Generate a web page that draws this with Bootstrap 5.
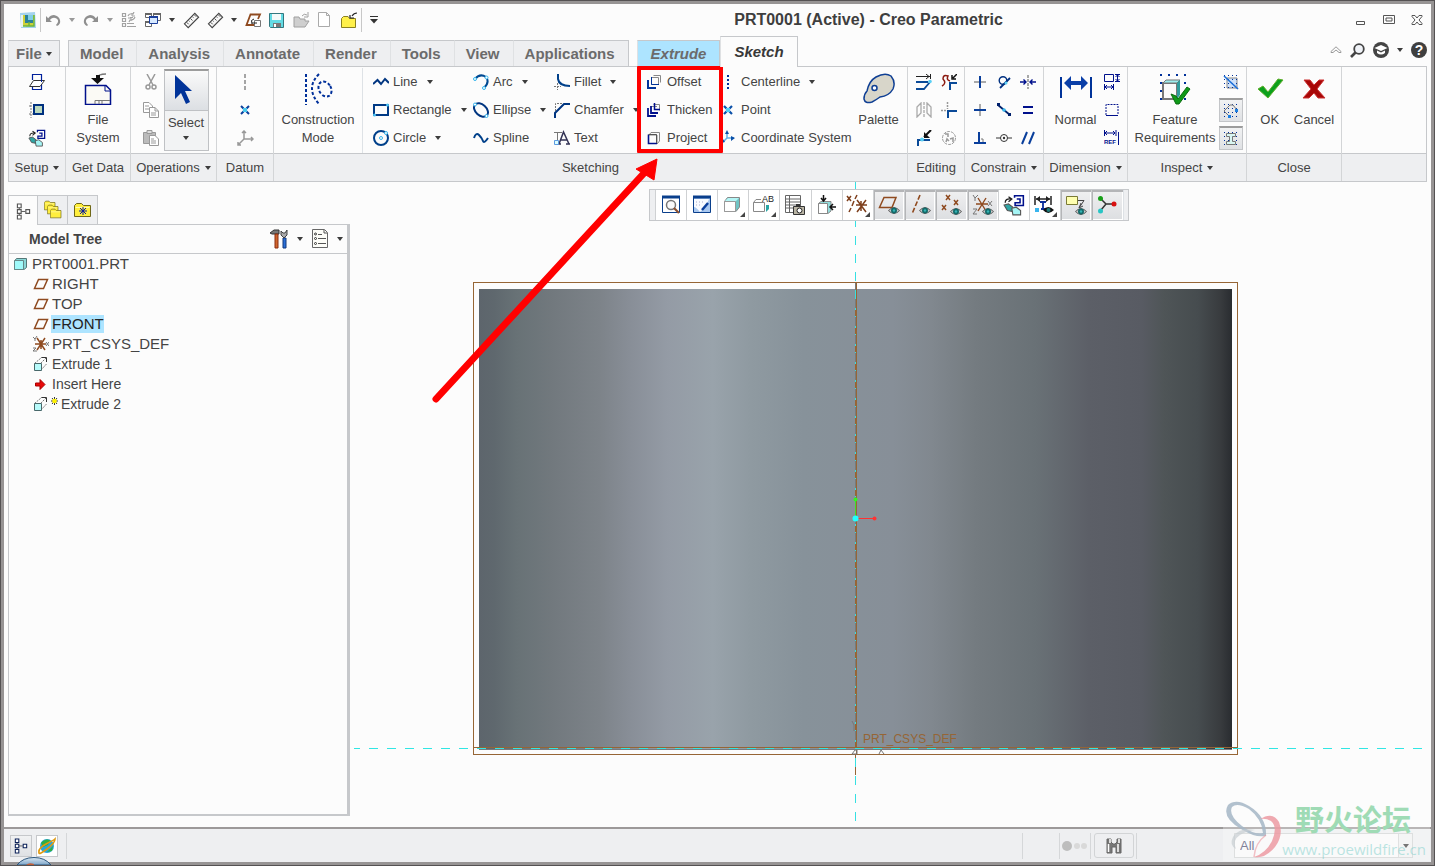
<!DOCTYPE html>
<html lang="en">
<head>
<meta charset="utf-8">
<meta name="viewport" content="width=device-width, initial-scale=1">
<title>PRT0001 (Active) - Creo Parametric</title>
<link href="https://cdn.jsdelivr.net/npm/bootstrap@5.3.0/dist/css/bootstrap.min.css" rel="stylesheet">
<style>
:root{--line:#c6c8cb;--soft:#eeeff1;--ink:#444;--paper:#fcfcfc}
body{font-family:"Liberation Sans",Arial,sans-serif;font-size:13px;line-height:18px;color:var(--ink);background:var(--paper)}
svg{display:block;flex:none}
button{color:inherit}
.app-frame{border:1px solid #555253}
.app-inner{border:3px solid #979494;background:var(--paper)}
.bare{background:none;border:0;padding:0;color:inherit;display:flex;align-items:center}
.caret-dn{display:inline-block;flex:none;border:3px solid transparent;border-top:4px solid #3c3c3c;border-bottom:0}
.caret-off{border-top-color:#9a9a9a}
/* title bar */
.titlebar{height:32px;padding-left:8px}
.q-icon{width:24px;height:24px;justify-content:center}
.q-caret{width:14px;height:24px;justify-content:center}
.v-rule{width:1px;height:24px;background:#c8c8c8}
.win-title{font-size:16px;font-weight:bold;color:#3e3e3e;padding-right:4px}
/* ribbon tabs */
.tabs-row{padding:0 4px;height:30px}
.r-tab{height:26px;padding:0 13px 0 11px;background:var(--soft);border:1px solid var(--line);border-bottom:0;border-left-color:#dfe1e3;border-right:0;font-size:15px;font-weight:bold;color:#6b6b6b;text-decoration:none;display:flex;align-items:center}
.r-tab.first{border-left-color:var(--line)}
.r-tab.last{border-right:1px solid var(--line)}
.r-tab.file{padding:0 7px;width:52px;border-right:1px solid var(--line)}
.r-tab.ctx{background:#ade4ff;padding:0 13px;font-style:italic;border-right:1px solid var(--line)}
.r-tab.on{background:var(--paper);height:31px;padding:0 13px;font-style:italic;color:#383838;border-right:1px solid var(--line);margin-bottom:-1px;z-index:1;position:relative}
/* ribbon */
.ribbon{margin:0 4px;border:1px solid var(--line)}
.r-group{border-right:1px solid #d3d5d7;flex:none;display:flex;flex-direction:column}
.r-body{height:86px;display:flex;justify-content:center;padding-top:1px}
.r-label{height:28px;background:var(--soft);border-top:1px solid var(--line);justify-content:center;gap:5px;width:100%;white-space:nowrap}
.w-s{width:57px}.w-m{width:65px}.w-l{width:79px}.w-dim{width:84px}.w-ops{width:86px}.w-close{width:95px}.w-insp{width:119px}.w-sk{width:634px}
.stack{display:grid;grid-template-rows:repeat(3,28px);align-items:center;justify-items:center}
.stack.two{grid-template-columns:25px 25px}
.stack.three{grid-template-columns:24px 24px 24px}
.big{flex-direction:column;justify-content:flex-start;padding-top:5px;gap:6px}
.big span{display:block;text-align:center}
.tool{gap:4px;white-space:nowrap}
.tool .caret-dn{margin-left:5px}
.split{width:45px;height:82px;margin:1px 0 0 1px;border:1px solid #bfc1c4;border-top:2px solid #9c9c9c;background:linear-gradient(#fafafa,#dcdfe3 39px,#bfc1c4 39px,#bfc1c4 40px,#f2f3f4 40px);flex-direction:column}
.pressed{border:1px solid #c3c5c8;border-top:2px solid #9c9c9c;background:linear-gradient(#f1f2f3,#dfe1e4)}
.toggle{width:24px;height:24px;justify-content:center}
.sk-grid{display:grid;grid-template-columns:89px 110px 81px 83px 84px 129px 1fr;width:100%}
.sk-grid .stack{justify-items:start}
.pad-a{padding-left:10px}
.callout{position:absolute;inset:-2px -2px 0 0;border:4px solid red;pointer-events:none;border-radius:1px}
.arrow-mark{position:absolute;right:59px;top:86px;pointer-events:none;z-index:5}
/* work area */
.work{min-height:0}
.side{width:342px;margin:13px 0 11px 4px}
.p-tab{width:30px;height:29px;background:var(--soft);border:1px solid var(--line);border-bottom:0;border-left:0;justify-content:center}
.p-tab.on{background:var(--paper);border-left:1px solid var(--line);height:30px;margin-bottom:-1px;z-index:1}
.panel-box{border:1px solid var(--line);border-right-width:3px;border-bottom-width:2px}
.panel-head{height:29px;border-bottom:1px solid var(--line);padding:0 4px 0 20px;font-size:14px}
.tree{font-size:14px;line-height:20px}
.tree li{display:flex;align-items:center;height:20px;gap:3px;padding-left:24px}
.tree li.root{padding-left:4px;gap:4px}
.tree .caps{font-size:15px}
.tree .sel{background:#ade4ff;color:#222;line-height:18px;box-shadow:-1px 0 #ade4ff}
.view-svg{flex:1 1 0;width:100%;min-height:0}
.view-bar{position:absolute;top:7px;left:0;right:0;display:flex;justify-content:center;padding-right:4px}
.view-inner{width:480px;height:32px;display:flex;border:1px solid var(--line);background:#fff}
.grip{width:5px;background:var(--soft)}
.v-btn{flex:1 1 0;border:0;border-left:1px solid #cfd1d3;background:#fff;padding:0;display:flex;align-items:center;justify-content:center}
.v-btn.down{box-shadow:inset 1px 2px 0 #b4b5b7,inset -1px -1px 0 #fff;background:linear-gradient(#f0f0f1,#dcdee1)}
/* status bar */
.status{height:35px;border-top:2px solid #9c9999;background:#eeeff1;padding-left:6px}
.s-btn{width:22px;height:22px;justify-content:center;border:1px solid var(--line)}
.s-rule{width:1px;height:26px;background:#d5d7d9}
.s-gap{margin-left:36px}
.s-dots{margin:0 3px 0 2px}
.s-end{margin:0 97px 0 2px}
.s-find{width:40px;height:25px;border:1px solid #d2d4d6;border-radius:3px;justify-content:center;margin-left:3px}
.filter{width:179px;height:25px;border:1px solid #d0d3d3;background:#f9f9fa;appearance:none;padding:0 5px;font-size:13px;color:#4b4b70}
.filter-wrap{position:relative;margin-right:18px}
.filter-btn{position:absolute;right:1px;top:1px;height:23px;width:14px;border-left:1px solid #d4d6d6;background:#f1f2f3;display:flex;align-items:center;justify-content:center;pointer-events:none}
.wm{position:absolute;right:4px;bottom:4px;width:207px;height:62px;background:rgba(252,252,252,.3);pointer-events:none}
.wm-logo{position:absolute;left:0;top:0}
.wm-txt{position:absolute;right:4px;top:2px;text-align:right}
.wm-name{font:bold 29px/34px "Noto Sans CJK SC",sans-serif;color:#9fdbb5;padding-right:15px}
.wm-url{font:15px/28px "Open Sans",sans-serif;color:rgba(120,205,200,.5)}
.orb{position:absolute;left:16px;bottom:0}
.mini-txt{font-family:"Liberation Sans",Arial,sans-serif}
</style>
</head>
<body>
<svg width="0" height="0" class="position-absolute" aria-hidden="true">
<defs>
<linearGradient id="cyl"><stop offset="0" stop-color="#5d656c"/><stop offset=".02" stop-color="#5f686e"/><stop offset=".05" stop-color="#687276"/><stop offset=".1" stop-color="#72797e"/><stop offset=".16" stop-color="#7d8389"/><stop offset=".2" stop-color="#888e97"/><stop offset=".25" stop-color="#949ba5"/><stop offset=".31" stop-color="#99a3ab"/><stop offset=".36" stop-color="#8f9aa1"/><stop offset=".43" stop-color="#87929a"/><stop offset=".55" stop-color="#878f98"/><stop offset=".6" stop-color="#81888f"/><stop offset=".66" stop-color="#747b80"/><stop offset=".74" stop-color="#697176"/><stop offset=".81" stop-color="#5c5f67"/><stop offset=".88" stop-color="#585b63"/><stop offset=".91" stop-color="#4f5557"/><stop offset=".955" stop-color="#464c4f"/><stop offset=".985" stop-color="#383b3e"/><stop offset="1" stop-color="#292c30"/></linearGradient>
<linearGradient id="orbg" x2="0" y2="1"><stop offset="0" stop-color="#dbe9f4"/><stop offset="1" stop-color="#7ba4c8"/></linearGradient>
<symbol id="plane" viewBox="0 0 16 16"><path d="M5.500 3.500H14.500L10.500 12.500H1.500Z" fill="none" stroke="#8f4a1f" stroke-width="1.500"/></symbol>
<symbol id="eye" viewBox="0 0 12 8"><path d="M0 4Q6-3 12 4Q6 11 0 4Z" fill="#555"/><path d="M1 4Q6-1 11 4Q6 9 1 4Z" fill="#ccc"/><circle cx="6" cy="4" r="3" fill="#146a6a"/><circle cx="6" cy="4" r="1.200" fill="#33b5b5"/></symbol>
<symbol id="csys" viewBox="0 0 16 16"><path d="M2 8H13M4 2L12 14M12 2L4 14M8 4V13" stroke="#8f4a1f" stroke-width="1.500"/><path d="M0 1L2 3L4 0M2 3V5M13 6L16 10M16 6L13 10M0 12H3L0 15H4" stroke="#777" fill="none"/></symbol>
<symbol id="ruler" viewBox="0 0 18 18"><path d="M1.500 12.500L12.500 1.500L16.500 5.500L5.500 16.500Z" fill="#f7f7f7" stroke="#444" stroke-width="1.200"/><path d="M4 11l2 2M6 9l1 1M8 7l2 2M10 5l1 1M12 3l2 2" stroke="#444"/></symbol>
<symbol id="extr" viewBox="0 0 16 16"><path d="M1.500 7.500L8 2M7.500 7.500L13 2M8 14L13.500 8M8 1.500H10" fill="none" stroke="#777" stroke-dasharray="2 1"/><path d="M1.500 7.500H8.500V14.500H1.500Z" fill="#b7fbfb" stroke="#48686a"/><path d="M9 1.500H13.500V6" fill="none" stroke="#333"/></symbol>
<symbol id="cubes" viewBox="0 0 20 20"><path d="M10.500 3.500V1.500H18.500V10.500H11V8H15.500V4.500H12.500" fill="none" stroke="#00108c" stroke-width="1.400"/><path d="M2 8Q2 4 7 4.500M5 2.500L8 4.500L5 7" fill="none" stroke="#222" stroke-width="1.200"/><path d="M1 10L5 9L9 12V16L4 15Z" fill="#2fa5a5" stroke="#555"/><path d="M8 13L12 12L16 15V19H9Z" fill="#a5f5f5" stroke="#555"/></symbol>
<symbol id="nodes" viewBox="0 0 16 18"><path d="M3.500 5V14M5 9.500H10" stroke="#555" fill="none"/><path d="M1.500 1.500H5.500V5.500H1.500ZM1.500 7.500H5.500V11.500H1.500ZM1.500 13.500H5.500V17.500H1.500ZM10.500 7.500H14.500V11.500H10.500Z" fill="#fff" stroke="currentColor" stroke-width="1.200"/></symbol>
<symbol id="folder" viewBox="0 0 18 16"><path d="M.5 14.500V3.500L2.500 1.500H7.500L9.500 3.500H16.500V14.500Z" fill="#ffee3d" stroke="#6e6618"/><path d="M1.500 5.500H15.500" stroke="#fffbb0"/></symbol>
</defs>
</svg>

<div class="app-frame vh-100 d-flex position-relative">
<div class="app-inner flex-grow-1 d-flex flex-column overflow-hidden">

<header class="titlebar d-flex align-items-center flex-shrink-0">
  <div class="d-flex align-items-center">
    <svg class="me-1 ms-2" width="16" height="16" viewBox="0 0 16 16"><path d="M0 1L15 0L16 16H1Z" fill="#a5d3ee"/><path d="M1 3H6V15H1Z" fill="#e9f4ee"/><path d="M3 3H14V14H3Z" fill="#cfd038"/><path d="M5 3H13V11H5Z" fill="#2c8298"/><path d="M8 3H13V8H8Z" fill="#81cde6"/><path d="M9 14V10M3 14H14V3" stroke="#6eb53c" fill="none" stroke-width="1.500"/></svg>
    <span class="v-rule"></span>
    <button class="bare q-icon" aria-label="Undo"><svg width="16" height="16" viewBox="0 0 16 16"><path d="M1 4V10H7L4.800 8Q8 4.500 11.500 6.500T11 13L12 14Q16 12 15 8T9 3Q5.500 3 3.200 6.200Z" fill="#8f8f8f"/></svg></button>
    <button class="bare q-caret" aria-label="Undo list"><i class="caret-dn caret-off"></i></button>
    <button class="bare q-icon" aria-label="Redo"><svg width="16" height="16" viewBox="0 0 16 16"><path d="M15 4V10H9L11.200 8Q8 4.500 4.500 6.500T5 13L4 14Q0 12 1 8T7 3Q10.500 3 12.800 6.200Z" fill="#8f8f8f"/></svg></button>
    <button class="bare q-caret" aria-label="Redo list"><i class="caret-dn caret-off"></i></button>
    <button class="bare q-icon" aria-label="Regenerate"><svg width="16" height="16" viewBox="0 0 16 16" fill="none" stroke="#a2a2a2"><path d="M1.500 1.500H4.500V4.500H1.500ZM1.500 6.500H4.500V9.500H1.500ZM1.500 11.500H4.500V14.500H1.500ZM6 11.500H13M6 14.500H15M7 4Q8 1 12 2L13 0M14 5Q13 8 9 8L8 10" stroke-width="1.200"/><path d="M9 5.500H12M11 1V4H14M10 9V6H7"/></svg></button>
    <button class="bare q-icon" aria-label="Windows"><svg width="16" height="16" viewBox="0 0 16 16"><path d="M.5 1.500H6.500V5.500H.5ZM8.500 1.500H15.500V8.500H8.500ZM.5 9.500H6.500V14.500H.5Z" fill="#fff" stroke="#666"/><path d="M0 2H7M8 2H16M0 10H6" stroke="#666" stroke-width="2"/><path d="M4.500 4.500H12.500V11.500H4.500Z" fill="#d7e9ff" stroke="#1c3f9c"/><path d="M4 5H13" stroke="#1c3f9c" stroke-width="2"/></svg></button>
    <button class="bare q-caret" aria-label="Window list"><i class="caret-dn"></i></button>
    <button class="bare q-icon" aria-label="Measure"><svg width="17" height="17"><use href="#ruler"/></svg></button>
    <button class="bare q-icon" aria-label="Measure options"><svg width="17" height="17"><use href="#ruler"/></svg></button>
    <button class="bare q-caret" aria-label="Measure list"><i class="caret-dn"></i></button>
    <button class="bare q-icon" aria-label="Sketch plane"><svg width="17" height="16" viewBox="0 0 17 16"><path d="M10 13H1.500L5.500 2.500H15L13 7" fill="none" stroke="#8f4a1f" stroke-width="1.800"/><path d="M9.500 8.500H15.500V14.500H9.500Z" fill="#fff" stroke="#777"/><path d="M7 11H12M9 7L6.500 8.500L7 12" stroke="#222" fill="none"/></svg></button>
    <button class="bare q-icon" aria-label="Save"><svg width="16" height="16" viewBox="0 0 16 16"><path d="M.5 1.500H14.500V15.500H1.500L.5 14.500Z" fill="#63dbe4" stroke="#33777f"/><path d="M3 2H12V8H3Z" fill="#f4f9f9"/><path d="M4 11H12V15H4Z" fill="#777"/><path d="M5 12H7V15H5Z" fill="#fff"/></svg></button>
    <button class="bare q-icon" aria-label="Open"><svg width="17" height="16" viewBox="0 0 17 16"><path d="M1 14V5H6L7 7H12V9H16L12 15H1Z" fill="#cfcfcf" stroke="#a0a0a0"/><path d="M9 4Q11 1 14 3M15 0V5H11" fill="none" stroke="#a0a0a0"/></svg></button>
    <button class="bare q-icon" aria-label="New"><svg width="16" height="16" viewBox="0 0 16 16"><path d="M1.500.5H9.500L12.500 3.500V14.500H1.500ZM9.500.5V3.500H12.500" fill="#fff" stroke="#aaa"/></svg></button>
    <button class="bare q-icon" aria-label="Working directory"><svg width="17" height="17" viewBox="0 0 17 17"><path d="M.5 15.500V6.500L2.500 4.500H7L8.500 6.500H14.500V15.500Z" fill="#fff04a" stroke="#8a8020"/><path d="M16 1Q13 1 11 4M9 3V6H13" fill="none" stroke="#222" stroke-width="1.200"/></svg></button>
    <span class="v-rule"></span>
    <button class="bare q-icon" aria-label="Customize"><svg width="10" height="8" viewBox="0 0 10 8"><path d="M1 .5H9" stroke="#333"/><path d="M1 3H9L5 7.500Z" fill="#333"/></svg></button>
  </div>
  <div class="win-title flex-grow-1 text-center">PRT0001 (Active) - Creo Parametric</div>
  <div class="d-flex align-items-center gap-3 pe-2">
    <button class="bare" aria-label="Minimize"><svg width="12" height="12" viewBox="0 0 12 12"><path d="M1.500 7.500H9.500V10.500H1.500Z" fill="none" stroke="#555"/></svg></button>
    <button class="bare" aria-label="Maximize"><svg width="12" height="12" viewBox="0 0 12 12"><path d="M.5 1.500H11.500V9.500H.5ZM3 4H9V7H3Z" fill="none" stroke="#555"/></svg></button>
    <button class="bare" aria-label="Close"><svg width="12" height="12" viewBox="0 0 12 12"><path d="M1 1.500H4L6 4L8 1.500H11V2.500L8 6L11 9.500V10.500H8L6 8L4 10.500H1V9.500L4 6L1 2.500Z" fill="none" stroke="#555"/></svg></button>
  </div>
</header>

<nav class="tabs-row d-flex align-items-end flex-shrink-0">
  <a href="#" class="r-tab file gap-1">File<i class="caret-dn"></i></a>
  <div class="d-flex ms-2">
  <a href="#" class="r-tab first">Model</a><a href="#" class="r-tab">Analysis</a><a href="#" class="r-tab">Annotate</a><a href="#" class="r-tab">Render</a><a href="#" class="r-tab">Tools</a><a href="#" class="r-tab">View</a><a href="#" class="r-tab last">Applications</a>
  </div>
  <div class="d-flex align-items-end ms-2"><a href="#" class="r-tab ctx">Extrude</a><a href="#" class="r-tab on">Sketch</a></div>
  <div class="d-flex align-items-center ms-auto gap-2 pb-2">
    <button class="bare" aria-label="Collapse ribbon"><svg width="12" height="8" viewBox="0 0 12 8"><path d="M1 5.500L6 .8L11 5.500V6.500H9L6 4L3 6.500H1Z" fill="none" stroke="#999"/></svg></button>
    <button class="bare" aria-label="Search"><svg width="15" height="15" viewBox="0 0 15 15"><circle cx="9" cy="6" r="4.800" fill="#f0f3f8" stroke="#444" stroke-width="1.800"/><path d="M5.500 9.500L1 14" stroke="#444" stroke-width="2.600"/></svg></button>
    <button class="bare" aria-label="Learning"><svg width="16" height="16" viewBox="0 0 16 16"><circle cx="8" cy="8" r="8" fill="#444"/><path d="M1.500 6L8 3L14.500 6L8 9Z" fill="#fff"/><path d="M4 8.500V11Q8 14 12 11V8.500L8 10.500Z" fill="#fff"/></svg></button>
    <i class="caret-dn"></i>
    <button class="bare" aria-label="Help"><svg width="16" height="16" viewBox="0 0 16 16"><circle cx="8" cy="8" r="8" fill="#3f3f3f"/><text x="8" y="13" text-anchor="middle" font-size="14" font-weight="bold" fill="#fff" class="mini-txt">?</text></svg></button>
  </div>
</nav>

<section class="ribbon d-flex flex-shrink-0">
  <div class="r-group w-s">
    <div class="r-body"><div class="stack">
      <button class="bare" aria-label="Sketch setup"><svg width="16" height="16" viewBox="0 0 16 16"><path d="M3.500 6V.5H12.500V15.500H3.500V12" fill="none" stroke="#00209c" stroke-width="1.200"/><path d="M.5 12.500L4.500 6.500H15.500L11 12.500Z" fill="#fff" stroke="#333"/><path d="M12.500 5V8" stroke="#00209c"/></svg></button>
      <button class="bare" aria-label="References"><svg width="16" height="16" viewBox="0 0 16 16"><path d="M2 0V16M0 4H3M0 12H15" stroke="#777" stroke-dasharray="2 1"/><path d="M5 3H14V12H5Z" fill="#bcd8bd" stroke="#003080" stroke-width="2"/></svg></button>
      <button class="bare" aria-label="Sketch view"><svg width="18" height="18"><use href="#cubes"/></svg></button>
    </div></div>
    <button class="bare r-label">Setup<i class="caret-dn"></i></button>
  </div>
  <div class="r-group w-m">
    <div class="r-body"><button class="bare big"><svg width="32" height="32" viewBox="0 0 32 32"><path d="M15 5Q16 1 24 1" fill="none" stroke="#777" stroke-width="1.500"/><path d="M9 5H14V2H18V5H22L15.500 11Z" fill="#111"/><path d="M3.500 12.500H24L28.500 17V31.500H3.500Z" fill="#fbfaf5" stroke="#00108c" stroke-width="1.500"/><path d="M23 13V18H28" fill="none" stroke="#00108c"/><path d="M13 31V27.500H28M17 27.500V31M20 27.500V31" fill="none" stroke="#777"/></svg><span>File<br>System</span></button></div>
    <div class="bare r-label">Get Data</div>
  </div>
  <div class="r-group w-ops">
    <div class="r-body"><div class="stack px-1">
      <button class="bare" aria-label="Cut"><svg width="16" height="16" viewBox="0 0 16 16" fill="none" stroke="#999" stroke-width="1.500"><path d="M4 0L10 11M12 0L6 11"/><circle cx="5" cy="13" r="2"/><circle cx="11" cy="13" r="2"/></svg></button>
      <button class="bare" aria-label="Copy"><svg width="16" height="16" viewBox="0 0 16 16" fill="#fff" stroke="#999"><path d="M.5.5H6L9.500 4V10.500H.5Z"/><path d="M6.500 5.500H12L15.500 9V15.500H6.500ZM12 5.500V9H15M2 4H6M2 7H6M8 11H13M8 13H13"/></svg></button>
      <button class="bare" aria-label="Paste"><svg width="16" height="16" viewBox="0 0 16 16" stroke="#999"><path d="M.5 2.500H12.500V13.500H.5Z" fill="#bbb"/><path d="M4 .5H9V3.500H4Z" fill="#ddd"/><path d="M6.500 5.500H12L15.500 9V15.500H6.500Z" fill="#fff"/><path d="M8 11H13M8 13H13M8 9H11"/></svg></button>
    </div>
    <button class="bare split"><svg width="24" height="39" viewBox="0 0 24 39"><path d="M1 4V28L7 22L12 33L16 31L11 20H18Z" fill="#003399"/></svg><span class="mt-1">Select</span><i class="caret-dn mt-1"></i></button></div>
    <button class="bare r-label">Operations<i class="caret-dn"></i></button>
  </div>
  <div class="r-group w-s">
    <div class="r-body"><div class="stack">
      <button class="bare" aria-label="Centerline"><svg width="16" height="16" viewBox="0 0 16 16"><path d="M8 0V16" stroke="#888" stroke-width="1.500" stroke-dasharray="4 2"/></svg></button>
      <button class="bare" aria-label="Point"><svg width="12" height="12" viewBox="0 0 12 12"><path d="M2 2L10 10M10 2L2 10" stroke="#0a3f9c" stroke-width="2"/><path d="M4 4H8V8H4Z" fill="#49c8ee"/></svg></button>
      <button class="bare" aria-label="Coordinate system"><svg width="17" height="17" viewBox="0 0 17 17"><path d="M7 1V9H16M7 9L1 15M5 3L7 1L9 3M14 7L16 9L14 11M1 12V15H4" fill="none" stroke="#999" stroke-width="1.500"/></svg></button>
    </div></div>
    <div class="bare r-label">Datum</div>
  </div>
  <div class="r-group w-sk">
    <div class="r-body"><div class="sk-grid">
      <button class="bare big border-end"><svg width="32" height="32" viewBox="0 0 32 32" fill="none" stroke="#00309a" stroke-width="2" stroke-dasharray="3 2"><path d="M4 1V32"/><path d="M17 1Q3 15 17 31"/><ellipse cx="23" cy="16" rx="6" ry="8" transform="rotate(-30 23 16)"/></svg><span>Construction<br>Mode</span></button>
      <div class="stack pad-a">
        <button class="bare tool"><svg width="16" height="16" viewBox="0 0 16 16"><path d="M0 10L4.500 6L8 10L12 5L16 9" fill="none" stroke="#003580" stroke-width="2"/></svg>Line<i class="caret-dn"></i></button>
        <button class="bare tool"><svg width="16" height="16" viewBox="0 0 16 16"><path d="M1 3H15V13H1Z" fill="none" stroke="#003a85" stroke-width="2"/><circle cx="14.500" cy="3" r="1.500" fill="#4cc3f3"/><circle cx="1.500" cy="13" r="1.500" fill="#4cc3f3"/></svg>Rectangle<i class="caret-dn"></i></button>
        <button class="bare tool"><svg width="16" height="16" viewBox="0 0 16 16"><circle cx="8" cy="8" r="7" fill="none" stroke="#00408a" stroke-width="2"/><circle cx="8" cy="8" r="1.500" fill="none" stroke="#35b5ec"/><circle cx="13" cy="3" r="1.500" fill="#fff" stroke="#35b5ec"/></svg>Circle<i class="caret-dn"></i></button>
      </div>
      <div class="stack">
        <button class="bare tool"><svg width="16" height="16" viewBox="0 0 16 16"><path d="M2 5Q7-1 13 3Q17 8 11 14" fill="none" stroke="#004a92" stroke-width="2"/><g fill="#fff" stroke="#35b5ec"><circle cx="2" cy="5" r="1.500"/><circle cx="13.500" cy="3.500" r="1.500"/><circle cx="11" cy="14" r="1.500"/></g></svg>Arc<i class="caret-dn"></i></button>
        <button class="bare tool"><svg width="16" height="16" viewBox="0 0 16 16"><ellipse cx="8" cy="8" rx="8" ry="5.500" transform="rotate(42 8 8)" fill="none" stroke="#003580" stroke-width="2"/><g fill="#fff" stroke="#35b5ec"><circle cx="2" cy="2.500" r="1.500"/><circle cx="13.500" cy="14" r="1.500"/></g></svg>Ellipse<i class="caret-dn"></i></button>
        <button class="bare tool"><svg width="16" height="16" viewBox="0 0 16 16"><path d="M1 8Q3 2 6 5T10 11T15 8" fill="none" stroke="#00408a" stroke-width="2"/></svg>Spline</button>
      </div>
      <div class="stack">
        <button class="bare tool"><svg width="16" height="16" viewBox="0 0 16 16"><path d="M4 0V5Q5 12 16 12" fill="none" stroke="#00408a" stroke-width="2"/><path d="M0 12.500H7M3.500 9V16" stroke="#777" stroke-dasharray="2 1"/></svg>Fillet<i class="caret-dn"></i></button>
        <button class="bare tool"><svg width="16" height="16" viewBox="0 0 16 16"><path d="M1 16V11L10 2H16" fill="none" stroke="#003580" stroke-width="2"/><path d="M1.500 9V1.500H8" fill="none" stroke="#777" stroke-dasharray="2 1"/></svg>Chamfer<i class="caret-dn"></i></button>
        <button class="bare tool"><svg width="16" height="16" viewBox="0 0 16 16"><path d="M3.500 2V13M0 2.500H8" stroke="#777"/><path d="M5 14L9.500 2L15 14M7 10H13M4 14H7M12 14H16" fill="none" stroke="#335" stroke-width="1.500"/><path d="M.5 10.500H4.500V14.500H.5Z" fill="#dff" stroke="#5c9ae0"/></svg>Text</button>
      </div>
      <div class="stack position-relative pad-a">
        <button class="bare tool"><svg width="16" height="16" viewBox="0 0 16 16" fill="none"><path d="M6.500 1.500H13.500V8.500" stroke="#888"/><path d="M4.500 3.500H11.500V10.500H4.500Z" stroke="#888"/><path d="M1 6V14H9" stroke="#003399" stroke-width="2"/><path d="M4.500 3V10.500H12" stroke="#003399"/></svg>Offset</button>
        <button class="bare tool"><svg width="16" height="16" viewBox="0 0 16 16" fill="none"><path d="M6.500 2.500H12.500V8.500M4 4.500H10" stroke="#888"/><path d="M1 6V14H9M4 4V11H11" stroke="#00108c" stroke-width="1.800"/><path d="M7.500 1V7.500H13" stroke="#00108c" stroke-width="1.500"/></svg>Thicken</button>
        <button class="bare tool"><svg width="16" height="16" viewBox="0 0 16 16" fill="none"><path d="M4 2.500H12.500V11L10 14V5H2Z" stroke="#888"/><path d="M1.500 4.500V13.500H10" stroke="#00108c" stroke-width="1.600"/><path d="M1.500 4.500H9.500V13" stroke="#555"/></svg>Project</button>
        <div class="callout"></div>
        <svg class="arrow-mark" width="230" height="250" viewBox="432 154 230 250"><path d="M436 399L646 171" stroke="red" stroke-width="7" stroke-linecap="round"/><path d="M657 159L636 169L654 180Z" fill="red" stroke="red"/></svg>
      </div>
      <div class="stack">
        <button class="bare tool"><svg width="16" height="16" viewBox="0 0 16 16"><path d="M7 1V15" stroke="#00309a" stroke-width="2" stroke-dasharray="2 2"/></svg>Centerline<i class="caret-dn"></i></button>
        <button class="bare tool"><svg width="16" height="16" viewBox="0 0 16 16"><path d="M3 4L11 12M11 4L3 12" stroke="#0a50a8" stroke-width="2.200"/><path d="M5 6H9V10H5Z" fill="#4cd0f5"/></svg>Point</button>
        <button class="bare tool"><svg width="16" height="16" viewBox="0 0 16 16"><path d="M6 2V8H13M6 8L2 12" stroke="#5faee8" fill="none" stroke-width="1.500"/><path d="M6 0L8 4H4ZM14 8L10 6V11ZM0 13L2 9L4 12Z" fill="#0a50a8"/></svg>Coordinate System</button>
      </div>
      <button class="bare big"><svg width="32" height="32" viewBox="0 0 32 32"><path d="M1 26Q1 21 4 18Q6 8 13 4Q22-1 28 3Q33 9 30 16Q26 23 17 24Q13 27 9 29Q2 31 1 26Z" fill="#d8d6ca" stroke="#0f3f94" stroke-width="1.500"/><circle cx="11.500" cy="15" r="2.500" fill="#fff" stroke="#0f3f94" stroke-width="1.500"/></svg><span>Palette</span></button>
    </div></div>
    <div class="bare r-label">Sketching</div>
  </div>
  <div class="r-group w-s">
    <div class="r-body"><div class="stack two">
      <button class="bare" aria-label="Modify"><svg width="16" height="16" viewBox="0 0 16 16"><path d="M0 2.500H14M10 0L13 2.500L10 5M14.500 0V5" fill="none" stroke="#222"/><path d="M0 8H12M14 8L8 15H0" fill="none" stroke="#0a4a98" stroke-width="1.800"/><circle cx="14" cy="7.500" r="1.800" fill="#5ad0f5"/></svg></button>
      <button class="bare" aria-label="Delete segment"><svg width="16" height="16" viewBox="0 0 16 16"><path d="M1 12Q6 9 2 5Q2 0 7 2Q5 6 9 7" fill="none" stroke="#8b1a10" stroke-width="1.500"/><path d="M9 16V9H16" fill="none" stroke="#0a4a98" stroke-width="2"/><path d="M16 0L12 4M11 1V5H15" stroke="#111" fill="none" stroke-width="1.500"/></svg></button>
      <button class="bare" aria-label="Mirror"><svg width="16" height="16" viewBox="0 0 16 16" fill="none" stroke="#aaa" stroke-width="1.300"><path d="M1 5L5 1V11L1 15ZM11 1L15 5V15L11 11Z"/><path d="M8 0V16" stroke-dasharray="3 1"/></svg></button>
      <button class="bare" aria-label="Divide"><svg width="16" height="16" viewBox="0 0 16 16"><path d="M6.500 0V7M0 8.500H6" stroke="#999" stroke-width="1.500" stroke-dasharray="2 1"/><path d="M7 16V9H16" fill="none" stroke="#0a4a98" stroke-width="2"/></svg></button>
      <button class="bare" aria-label="Corner"><svg width="16" height="16" viewBox="0 0 16 16"><path d="M2 16V10H14" fill="none" stroke="#0a4a98" stroke-width="2"/><path d="M15 0L8 7" stroke="#111" stroke-width="2"/><path d="M8 2V8H14Z" fill="#111"/><circle cx="6" cy="9.500" r="2" fill="#5ad0f5"/></svg></button>
      <button class="bare" aria-label="Rotate resize"><svg width="16" height="16" viewBox="0 0 16 16" fill="none" stroke="#999"><circle cx="8" cy="8" r="6.500" stroke-dasharray="3 1"/><path d="M4 4H7V7M9 9L12 8V12M5 12L6 9L8 11" stroke-width="1.500"/></svg></button>
    </div></div>
    <div class="bare r-label">Editing</div>
  </div>
  <div class="r-group w-l">
    <div class="r-body"><div class="stack three">
      <button class="bare" aria-label="Vertical"><svg width="14" height="14" viewBox="0 0 14 14"><path d="M1 7H13" stroke="#aaa" stroke-width="2"/><path d="M7 1V13" stroke="#0a3f9c" stroke-width="2"/></svg></button>
      <button class="bare" aria-label="Tangent"><svg width="14" height="14" viewBox="0 0 14 14"><circle cx="6" cy="5.500" r="3.800" fill="none" stroke="#003080" stroke-width="1.400"/><path d="M13 3L3 13" stroke="#003080" stroke-width="1.800"/><circle cx="9" cy="8" r="1.500" fill="#5ad0f5"/></svg></button>
      <button class="bare" aria-label="Symmetric"><svg width="16" height="14" viewBox="0 0 16 14"><path d="M8 0V14" stroke="#555" stroke-dasharray="3 1"/><path d="M0 7H6M16 7H10M3.500 4.500L6 7L3.500 9.500M12.500 4.500L10 7L12.500 9.500" fill="none" stroke="#00108c" stroke-width="1.400"/></svg></button>
      <button class="bare" aria-label="Horizontal"><svg width="14" height="14" viewBox="0 0 14 14"><path d="M7 1V13" stroke="#aaa" stroke-width="2"/><path d="M1 7H13" stroke="#0a3f9c" stroke-width="2"/></svg></button>
      <button class="bare" aria-label="Mid-point"><svg width="14" height="14" viewBox="0 0 14 14"><path d="M1 2L13 12" stroke="#00206c" stroke-width="1.800"/><path d="M0 0H3V3H0ZM11 10H14V13H11Z" fill="#00206c"/><circle cx="7" cy="7" r="1.800" fill="#35b5ec"/></svg></button>
      <button class="bare" aria-label="Equal"><svg width="12" height="10" viewBox="0 0 12 10"><path d="M1 2H11M1 8H11" stroke="#00108c" stroke-width="2"/></svg></button>
      <button class="bare" aria-label="Perpendicular"><svg width="14" height="14" viewBox="0 0 14 14"><path d="M6 1V12M1 12H13" stroke="#0a3f9c" stroke-width="2"/><path d="M8 8H10V11" fill="none" stroke="#777"/></svg></button>
      <button class="bare" aria-label="Coincident"><svg width="16" height="12" viewBox="0 0 16 12"><path d="M0 6H16" stroke="#333"/><circle cx="8" cy="6" r="3.500" fill="#fff" stroke="#333"/><circle cx="8" cy="6" r="1.200" fill="#333"/></svg></button>
      <button class="bare" aria-label="Parallel"><svg width="14" height="14" viewBox="0 0 14 14"><path d="M1 13L6 1M8 13L13 1" stroke="#0a3f9c" stroke-width="2"/></svg></button>
    </div></div>
    <button class="bare r-label">Constrain<i class="caret-dn"></i></button>
  </div>
  <div class="r-group w-dim">
    <div class="r-body"><button class="bare big ps-1"><svg width="32" height="32" viewBox="0 0 32 32"><path d="M1 4V25M31 4V25" stroke="#003399" stroke-width="2"/><path d="M4 10L11 3V8H21V3L28 10L21 17V12H11V17Z" fill="#0a3fa8"/></svg><span>Normal</span></button>
    <div class="stack ps-2">
      <button class="bare" aria-label="Perimeter"><svg width="16" height="16" viewBox="0 0 16 16" fill="none" stroke="#00108c"><path d="M.5.5H9.500V7.500H.5ZM11 .5H16M11 7.500H16M13.500 1V7M11.500 3L13.500 1L15.500 3M11.500 5L13.500 7L15.500 5M.5 10V16M9.500 10V16M1 13H9M3 11L1 13L3 15M7 11L9 13L7 15"/></svg></button>
      <button class="bare" aria-label="Baseline"><svg width="14" height="14" viewBox="0 0 14 14"><path d="M1 12V1.500H13V12" fill="none" stroke="#00108c" stroke-dasharray="2 1"/><path d="M1 12.500H13" stroke="#00108c"/></svg></button>
      <button class="bare" aria-label="Reference"><svg width="16" height="16" viewBox="0 0 16 16"><path d="M.5 0V6M12 0V6M1 3H11M3 1L1 3L3 5M9 1L11 3L9 5M14.500 2V15" fill="none" stroke="#00108c"/><text x="0" y="14" font-size="6" font-weight="bold" fill="#00108c" class="mini-txt">REF</text></svg></button>
    </div></div>
    <button class="bare r-label">Dimension<i class="caret-dn"></i></button>
  </div>
  <div class="r-group w-insp">
    <div class="r-body gap-1 ps-1"><button class="bare big"><svg width="32" height="32" viewBox="0 0 32 32"><path d="M1 2H28M1 10H28M1 18H8M1 26H28" stroke="#00309a" stroke-width="2" stroke-dasharray="2 6"/><path d="M4 10H18V26H4Z" fill="#fafafa" stroke="#777" stroke-width="2"/><path d="M4 10L7 7H21L18 10Z" fill="#9eeeee" stroke="#777"/><path d="M18 10L21 7V22L18 26Z" fill="#2f9c9c"/><path d="M12 21L17 23L19 26L28 14L31 16L20 31H17Z" fill="#0f9a18" stroke="#0a6a10"/></svg><span>Feature<br>Requirements</span></button>
    <div class="stack">
      <button class="bare" aria-label="Shade closed loops"><svg width="16" height="16" viewBox="0 0 16 16"><path d="M4 4H14V14H4Z" fill="#cfe2fb" stroke="#888"/><path d="M1 1.500H16M1 5.500H16M1 9.500H16M1 13.500H16" stroke="#00309a" stroke-dasharray="1 3"/><path d="M1 2L15 15" stroke="#1c6fd8" stroke-width="1.600"/></svg></button>
      <button class="bare pressed toggle" aria-label="Highlight open ends"><svg width="16" height="16" viewBox="0 0 16 16"><path d="M1 1.500H16M1 5.500H16M1 9.500H16M1 13.500H16" stroke="#00309a" stroke-dasharray="1 3"/><path d="M6 13L1 8L7 2H10L14 7" fill="none" stroke="#777"/><path d="M5 12H8V15H5ZM12 6H15V9H12Z" fill="#1c7fe0"/></svg></button>
      <button class="bare pressed toggle" aria-label="Overlapping geometry"><svg width="16" height="16" viewBox="0 0 16 16"><path d="M1 1.500H16M1 5.500H16M1 9.500H16M1 13.500H16" stroke="#00309a" stroke-dasharray="1 3"/><path d="M3.500 2.500H12.500V5.500H9.500V10.500H12.500V13.500H3.500V10.500H6.500V5.500H3.500Z" fill="#d8f6f2" stroke="#777"/></svg></button>
    </div></div>
    <button class="bare r-label">Inspect<i class="caret-dn"></i></button>
  </div>
  <div class="r-group w-close">
    <div class="r-body gap-2"><button class="bare big"><svg width="32" height="32" viewBox="0 0 32 32"><path d="M4 16L9 13L14 19L24 6L29 7L14 25Z" fill="#0ca01c" stroke="#5fae2c"/></svg><span>OK</span></button>
    <button class="bare big"><svg width="32" height="32" viewBox="0 0 32 32"><path d="M6 7H12L16 12L21 7H26L19 16L27 25H20L16 20L11 25H5L13 16Z" fill="#a80707" stroke="#c33"/></svg><span>Cancel</span></button></div>
    <div class="bare r-label">Close</div>
  </div>
  <div class="r-group flex-fill border-0"><div class="r-body"></div><div class="bare r-label"></div></div>
</section>

<main class="work d-flex flex-grow-1">
  <aside class="side d-flex flex-column flex-shrink-0">
    <div class="d-flex align-items-end">
      <button class="bare p-tab on" aria-label="Model tree"><svg width="15" height="18" color="#555"><use href="#nodes"/></svg></button>
      <button class="bare p-tab" aria-label="Folder browser"><svg width="20" height="20" viewBox="0 0 20 20"><use href="#folder" x="1" y="0" width="12" height="11"/><use href="#folder" x="4" y="4" width="12" height="11"/><use href="#folder" x="7" y="8" width="12" height="11"/></svg></button>
      <button class="bare p-tab" aria-label="Favorites"><svg width="18" height="16" viewBox="0 0 18 16"><use href="#folder" width="18" height="16"/><path d="M9 5V13M5 9H13M6 6L12 12M12 6L6 12" stroke="#0a1c9c"/></svg></button>
    </div>
    <div class="panel-box flex-grow-1">
      <div class="panel-head d-flex align-items-center">
        <strong class="flex-grow-1">Model Tree</strong>
        <button class="bare gap-2 me-2" aria-label="Tree settings"><svg width="20" height="20" viewBox="0 0 20 20"><path d="M1 4L5 1H10V5H3Z" fill="#777" stroke="#333"/><path d="M6 5H9V19H6Z" fill="#d0662c" stroke="#8a2c10"/><path d="M14 9H17V19H14Z" fill="#2a6fd8" stroke="#14387a"/><path d="M12 2V6L15 9L18 6V1L16 4H14Z" fill="#aaa" stroke="#444"/></svg><i class="caret-dn"></i></button>
        <button class="bare gap-2" aria-label="Tree display"><svg width="18" height="20" viewBox="0 0 18 20"><path d="M1.500.5H13.500L16.500 3.500V18.500H1.500Z" fill="#fdfdf8" stroke="#666"/><path d="M7 5.500H11M7 9.500H15M7 14.500H15M13 1V4H16" stroke="#555" fill="none"/><g fill="none" stroke="#333"><circle cx="4.500" cy="5" r="1"/><circle cx="4.500" cy="9.500" r="1"/><circle cx="4.500" cy="14.500" r="1"/></g></svg><i class="caret-dn"></i></button>
      </div>
      <ul class="tree list-unstyled mb-0">
        <li class="root caps"><svg width="15" height="14" viewBox="0 0 15 14"><path d="M1.500 4L3.500 1.500H13.500V10.500L11 12.500H1.500Z" fill="#8ad8d8" stroke="#577"/><path d="M1.500 3.500H10.500V12.500H1.500Z" fill="#a0fafa" stroke="#688"/></svg>PRT0001.PRT</li>
        <li class="caps"><svg width="16" height="16"><use href="#plane"/></svg>RIGHT</li>
        <li class="caps"><svg width="16" height="16"><use href="#plane"/></svg>TOP</li>
        <li class="caps"><svg width="16" height="16"><use href="#plane"/></svg><span class="sel">FRONT</span></li>
        <li class="caps"><svg width="16" height="16"><use href="#csys"/></svg>PRT_CSYS_DEF</li>
        <li><svg width="16" height="16"><use href="#extr"/></svg>Extrude 1</li>
        <li><svg width="16" height="16" viewBox="0 0 16 16"><path d="M2.500 7H7V3.500L12 8.500L7 13.500V10H2.500Z" fill="#e80808" stroke="#a00"/></svg>Insert Here</li>
        <li><svg width="25" height="16" viewBox="0 0 25 16"><use href="#extr" width="16" height="16"/><path d="M21.500 1V9M18 5H25M19 2L24 8M24 2L19 8" stroke="#333"/><circle cx="21.500" cy="5" r="2.300" fill="#fff200"/></svg><span>Extrude 2</span></li>
      </ul>
    </div>
  </aside>

  <section class="flex-grow-1 position-relative d-flex flex-column">
    <svg class="view-svg" viewBox="350 182 1081 645">
      <rect x="479" y="289" width="753" height="460" fill="url(#cyl)"/>
      <g fill="none" stroke="#966535" shape-rendering="crispEdges">
        <path d="M473.500 282.500H1237.500V754.500H473.500ZM473.500 747.500H1237.500"/>
        <path d="M856.500 283V755M855.500 755V775"/>
      </g>
      <path d="M479 749.500H1232" stroke="#757b80" shape-rendering="crispEdges"/>
      <path d="M855.500 283V749" stroke="#777b7c" shape-rendering="crispEdges"/>
      <path d="M855.500 182V821" stroke="#36e0e2" stroke-dasharray="9 9" shape-rendering="crispEdges"/>
      <path d="M855.500 301V748" stroke="#966535" stroke-dasharray="6 12" stroke-dashoffset="9" shape-rendering="crispEdges"/>
      <path d="M354 748.500H1423" stroke="#30e6e4" stroke-dasharray="9 9" stroke-dashoffset="3" shape-rendering="crispEdges"/>
      <path d="M855.500 518V500" stroke="#3fe02c"/><circle cx="855.500" cy="499.500" r="2" fill="#33f322"/>
      <path d="M858 518.500H874" stroke="#ff3030"/><circle cx="874.500" cy="518.500" r="2" fill="#f33"/>
      <circle cx="855.500" cy="518.500" r="3" fill="#2ff"/>
      <path d="M852 721L854 725V731M852 754L855 750H857V754ZM879 754L881 750L884 754" fill="none" stroke="#777"/>
      <text x="863" y="743" font-size="12" fill="#966535" class="mini-txt">PRT_CSYS_DEF</text>
    </svg>
    <div class="view-bar"><div class="view-inner">
      <div class="grip"></div>
      <button class="v-btn" aria-label="Refit"><svg width="20" height="20" viewBox="0 0 20 20"><path d="M1.500 1.500H18.500V17.500H1.500Z" fill="#fff" stroke="#0a3f8c"/><path d="M1 2H19" stroke="#0a3f8c" stroke-width="3"/><circle cx="10" cy="10" r="4.500" fill="#fafafa" stroke="#777" stroke-width="1.500"/><path d="M13 13L18 18" stroke="#8a5030" stroke-width="2.200"/></svg></button>
      <button class="v-btn" aria-label="Repaint"><svg width="20" height="20" viewBox="0 0 20 20"><path d="M1.500 1.500H18.500V17.500H1.500Z" fill="#a9c8f0" stroke="#0a3f8c"/><path d="M2 4H17Q14 12 8 17Q4 12 2 12Z" fill="#f8fbff"/><path d="M1 2H19" stroke="#0a3f8c" stroke-width="3"/><path d="M10 15L16 8" stroke="#0a3f9c" stroke-width="2.500"/><path d="M4 7H12M4 10H10" stroke="#aac" stroke-dasharray="1 2"/></svg></button>
      <button class="v-btn" aria-label="Display style"><svg width="24" height="24" viewBox="0 0 24 24"><path d="M3.500 8.500L6.500 4.500H18.500V14L15 18.500H3.500Z" fill="#6ec4c4" stroke="#888"/><path d="M3.500 8.500H14.500V18.500H3.500Z" fill="#fff" stroke="#999"/><path d="M4 8L7 5H18L15 8Z" fill="#b4f6f6"/><path d="M24 19V24H19Z" fill="#444"/></svg></button>
      <button class="v-btn" aria-label="Saved orientations"><svg width="24" height="24" viewBox="0 0 24 24"><path d="M1.500 18.500V9.500L4 6.500H9M1.500 9.500H12.500V18.500H1.500" fill="none" stroke="#888"/><path d="M14 12H17V16L14 19Z" fill="#2aa5a5"/><text x="10" y="9" font-size="9" fill="#222" class="mini-txt">AB</text><path d="M24 19V24H19Z" fill="#444"/></svg></button>
      <button class="v-btn" aria-label="View manager"><svg width="22" height="22" viewBox="0 0 22 22"><path d="M1.500 1.500H16.500V18.500H1.500ZM1.500 5H16.500M1.500 8H16M1.500 11H16M1.500 14H12M5.500 1.500V18" fill="#fff" stroke="#666"/><path d="M9.500 12.500H20.500V20.500H9.500Z" fill="#b9b4a4" stroke="#333"/><path d="M12 10H16V12H12Z" fill="#333"/><circle cx="15.500" cy="16.500" r="2.500" fill="#fff" stroke="#222"/></svg></button>
      <button class="v-btn" aria-label="Perspective"><svg width="20" height="20" viewBox="0 0 20 20"><path d="M1.500 8.500L4 6.500H14V16L11 18.500H1.500Z" fill="#92dcdc" stroke="#888"/><path d="M1.500 8.500H10.500V18.500H1.500Z" fill="#fff" stroke="#888"/><path d="M6.500 0V6M4 3L6.500 6L9 3" stroke="#111" fill="none" stroke-width="1.500"/><path d="M19 12H13M16 9L13 12L16 15" stroke="#111" fill="none" stroke-width="1.500"/></svg></button>
      <button class="v-btn" aria-label="Datum filters"><svg width="25" height="24" viewBox="0 0 25 24"><path d="M2 3L6 8M6 3L2 8M12 2L10 6M9 8L7 13M6 15L4 19M11 12H22M12 7L21 19M21 7L12 19M16 8V18" stroke="#7e3f1c" stroke-width="1.500"/><path d="M25 19V24H20Z" fill="#444"/></svg></button>
      <button class="v-btn down" aria-label="Plane display"><svg width="22" height="22" viewBox="0 0 22 22"><path d="M6 3.500H18L14 13.500H1.500Z" fill="none" stroke="#8f4a1f" stroke-width="1.500"/><use href="#eye" x="10" y="12" width="12" height="9"/></svg></button>
      <button class="v-btn down" aria-label="Axis display"><svg width="22" height="22" viewBox="0 0 22 22"><path d="M11 1L3 20" stroke="#8f4a1f" stroke-width="1.600" stroke-dasharray="5 2"/><use href="#eye" x="10" y="12" width="12" height="9"/></svg></button>
      <button class="v-btn down" aria-label="Point display"><svg width="22" height="22" viewBox="0 0 22 22"><path d="M6 1L10 6M10 1L6 6M14 6L18 11M18 6L14 11M2 11L6 16M6 11L2 16" stroke="#8f4a1f" stroke-width="1.500"/><use href="#eye" x="10" y="13" width="12" height="9"/></svg></button>
      <button class="v-btn down" aria-label="Csys display"><svg width="22" height="22" viewBox="0 0 22 22"><path d="M4 10H16M6 4L14 17M14 4L6 17" stroke="#8f4a1f" stroke-width="1.400"/><path d="M1 1L3 4L6 1M3 4V7M16 7L20 12M20 7L16 12M1 15H5L1 20H5" stroke="#777" fill="none"/><use href="#eye" x="10" y="13" width="12" height="9"/></svg></button>
      <button class="v-btn" aria-label="Sketch view"><svg width="22" height="22"><use href="#cubes"/></svg></button>
      <button class="v-btn" aria-label="Sketcher display"><svg width="24" height="24" viewBox="0 0 24 24"><path d="M2 3V12M18 3V12M3 6H17" stroke="#222" stroke-width="1.500"/><path d="M3 6L7 3V9ZM17 6L13 3V9Z" fill="#222"/><path d="M7 9H13M10 9V16M8 16H13" stroke="#0a2f9c" stroke-width="1.800"/><path d="M2 15H6V19H2Z" fill="#39b5ee"/><path d="M10 17Q15 11 21 17Q15 23 10 17Z" fill="#111"/><circle cx="15.500" cy="17" r="2" fill="#1f7c7c"/><path d="M24 19V24H19Z" fill="#444"/></svg></button>
      <button class="v-btn down" aria-label="Annotations"><svg width="22" height="22" viewBox="0 0 22 22"><path d="M1.500 2.500H12.500V10.500H1.500Z" fill="#ffffb0" stroke="#7a7a35"/><path d="M13 6.500H19L14 14M16 9L14 14L18 12" fill="none" stroke="#444"/><use href="#eye" x="10" y="13" width="12" height="9"/></svg></button>
      <button class="v-btn down" aria-label="Spin center"><svg width="22" height="22" viewBox="0 0 22 22"><path d="M5 5L10 10H17M10 10L5 16" fill="none" stroke="#333" stroke-width="1.500"/><circle cx="4.500" cy="4.500" r="2.500" fill="#18a018"/><circle cx="18" cy="10" r="2.500" fill="#d81010"/><circle cx="4.500" cy="17" r="2.500" fill="#28c5c5"/></svg></button>
      <div class="grip border-start"></div>
    </div></div>
  </section>
</main>

<footer class="status d-flex align-items-center flex-shrink-0">
  <button class="bare s-btn pressed" aria-label="Toggle tree"><svg width="14" height="17" color="#0a2058"><use href="#nodes"/></svg></button>
  <button class="bare s-btn bg-white ms-1" aria-label="Browser"><svg width="18" height="18" viewBox="0 0 18 18"><circle cx="9" cy="9" r="7" fill="#28a5dd"/><path d="M3 6Q7 1 12 3L10 8L5 10ZM9 15L15 9L14 14Z" fill="#2fae45"/><path d="M1 16Q0 11 8 7T17 2Q17 6 9 12T1 16Z" fill="none" stroke="#e09a10" stroke-width="1.600"/></svg></button>
  <span class="s-rule ms-2"></span>
  <span class="s-rule ms-auto"></span>
  <span class="s-rule s-gap"></span>
  <svg class="s-dots" width="25" height="12" viewBox="0 0 25 12"><circle cx="5" cy="6" r="5" fill="#bdbdbd"/><circle cx="15" cy="6" r="3" fill="#d9d9d9"/><circle cx="22" cy="6" r="3" fill="#d9d9d9"/></svg>
  <span class="s-rule"></span>
  <button class="bare s-find" aria-label="Find"><svg width="18" height="16" viewBox="0 0 18 16"><path d="M2 1H6V4L8 6H10L12 4V1H16V15H11V9H7V15H2Z" fill="#777" stroke="#666"/><path d="M3.500 6V14M13 6V14M5 1V5M14 1V5" stroke="#fff" stroke-width="1.500"/></svg></button>
  <span class="s-rule s-end"></span>
  <div class="filter-wrap"><select class="filter" aria-label="Selection filter"><option>All</option></select><span class="filter-btn"><i class="caret-dn"></i></span></div>
</footer>
</div>

<div class="wm">
  <svg class="wm-logo" width="62" height="62" viewBox="0 0 62 62" fill-rule="evenodd"><path d="M5 6Q13-1 26 7Q44 18 43 37Q32 39 18 30Q-2 18 5 6ZM9 8Q5 16 19 27Q31 36 40 34Q39 20 26 10Q14 3 9 8Z" fill="#a5b6c6" opacity=".85"/><path d="M37 20Q50 12 56 23Q61 36 52 48Q42 60 31 58Q43 54 49 42Q55 28 48 22Q43 19 37 20Z" fill="#ec9aa2" opacity=".85"/><path d="M31 58Q32 44 43 36" fill="none" stroke="#ec9aa2" stroke-width="1.500" opacity=".6"/><path d="M32 31Q16 28 10 38Q6 46 13 50Q9 41 17 36Q23 32 32 31Z" fill="#c8cdd2" opacity=".7"/></svg>
  <div class="wm-txt"><div class="wm-name" lang="zh">野火论坛</div><div class="wm-url">www.proewildfire.cn</div></div>
</div>
<svg class="orb" width="34" height="8" viewBox="0 0 34 8"><path d="M0 8Q6 .5 17 .5T34 8Z" fill="url(#orbg)" stroke="#2c567c"/><path d="M9 8Q12 5 17 7V8Z" fill="#c0603c"/></svg>
</div>
<script src="https://cdn.jsdelivr.net/npm/bootstrap@5.3.0/dist/js/bootstrap.bundle.min.js"></script>
</body>
</html>
